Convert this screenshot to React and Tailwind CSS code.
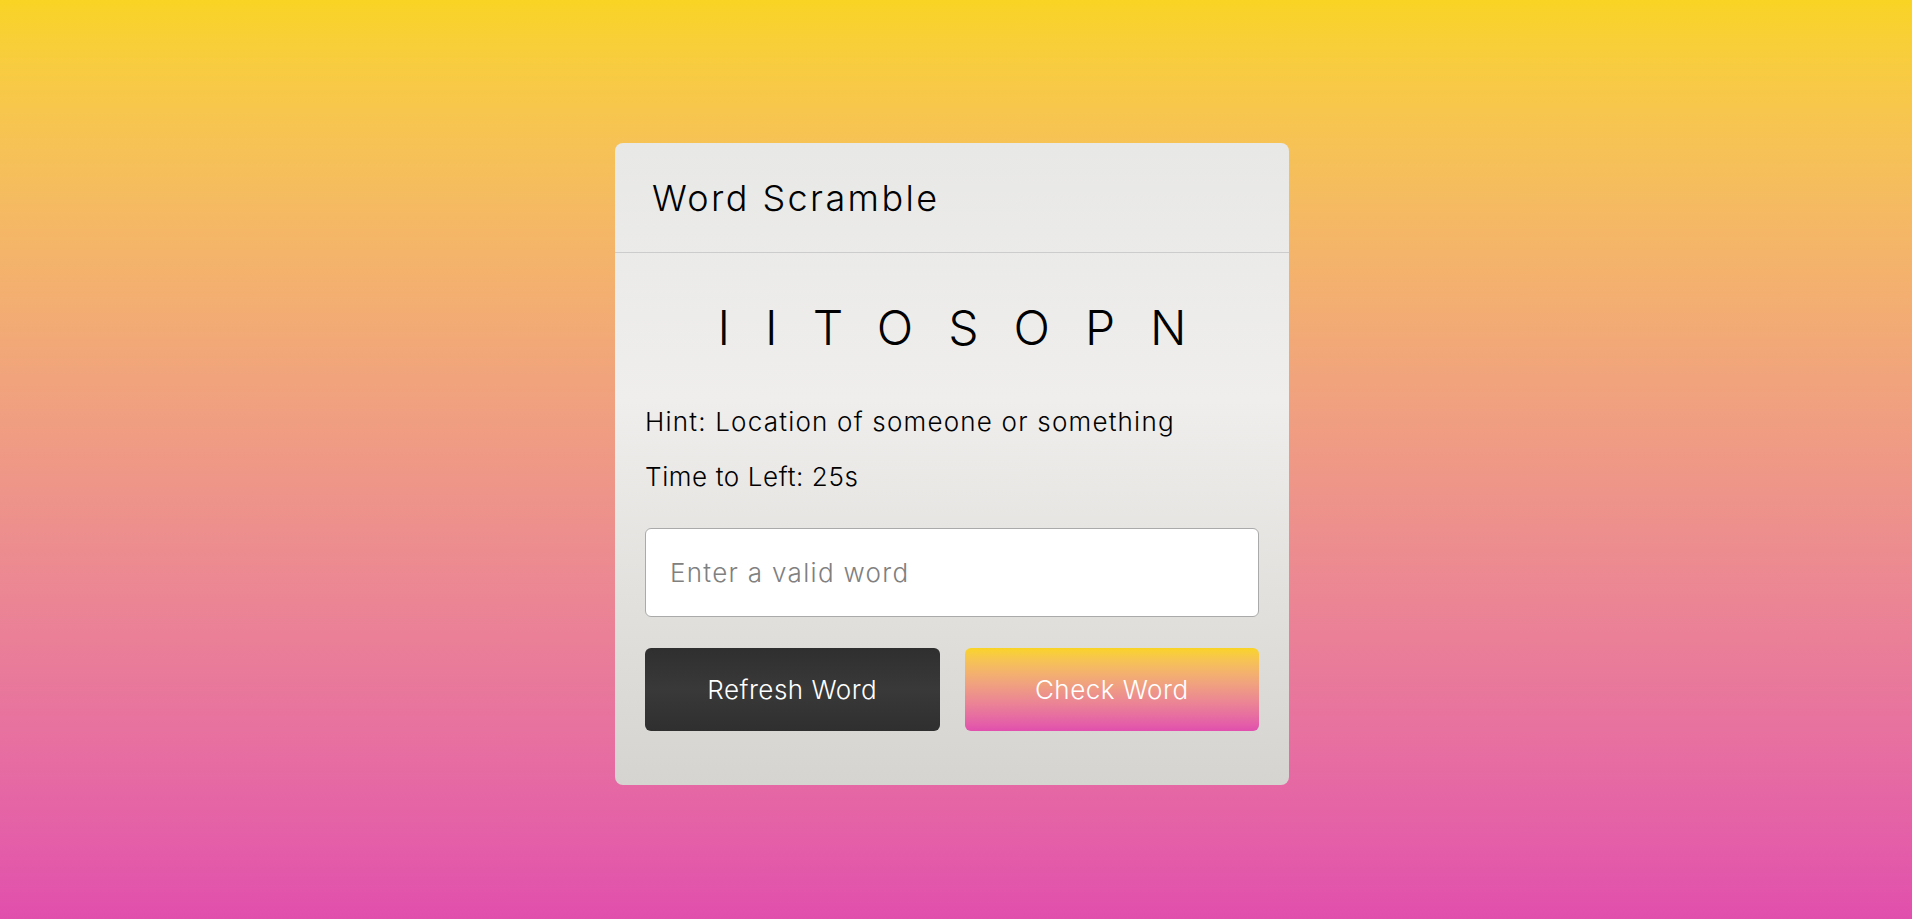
export default function App() {
  const word = "IITOSOPN";
  return (
    <div
      className="min-h-screen w-full flex items-start justify-center bg-gradient-to-b from-[#f9d423] to-[#e14fad]"
      style={{ fontFamily: "Inter, 'Open Sans', sans-serif" }}
    >
      <div className="mt-[143px] mr-[8px] w-[674px] rounded-[8px] bg-gradient-to-b from-[#e8e8e6] via-[#efeeec] via-40% to-[#d5d4d0] text-black">
        <div className="h-[110px] flex items-center px-[37px] border-b border-[#cccccc]">
          <h1 className="text-[36px] font-light leading-none tracking-[2.4px]">Word Scramble</h1>
        </div>
        <div className="px-[30px] pt-[40px] pb-[54px]">
          <p className="h-[70px] leading-[70px] text-center text-[48px] font-light tracking-[35px] mr-[-35px]">
            {word}
          </p>
          <div className="mt-[31px] text-[26px] font-light leading-[55px]">
            <p className="tracking-[1.2px]">Hint: Location of someone or something</p>
            <p className="tracking-[0.6px]">Time to Left: 25s</p>
          </div>
          <input
            type="text"
            placeholder="Enter a valid word"
            className="mt-[24px] w-full h-[89px] rounded-[6px] border border-[#aaaaaa] bg-white px-[24px] text-[26px] font-light tracking-[1.3px] outline-none placeholder:text-[#808080]"
          />
          <div className="mt-[31px] grid grid-cols-2 gap-[25px]">
            <button className="h-[83px] rounded-[6px] bg-gradient-to-b from-[#2f2f2f] via-[#393939] to-[#2f2f2f] text-white text-[26px] font-light tracking-[0.5px]">
              Refresh Word
            </button>
            <button className="h-[83px] rounded-[6px] bg-gradient-to-b from-[#f9d423] to-[#e14fad] text-white text-[26px] font-light tracking-[0.5px]">
              Check Word
            </button>
          </div>
        </div>
      </div>
    </div>
  );
}
